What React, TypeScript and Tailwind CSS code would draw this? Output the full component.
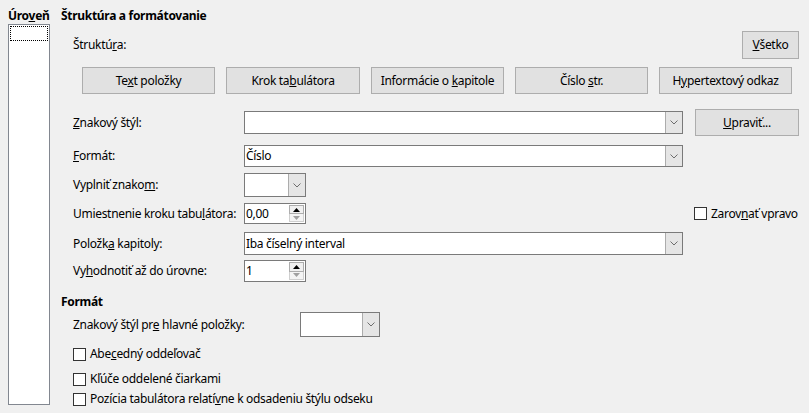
import React from 'react';

const font = "font-['Segoe_UI','Noto_Sans',sans-serif] text-[12px] leading-[16px] tracking-[-0.3px] text-black";

function Chevron() {
    return (
        <svg width="8" height="5" viewBox="0 0 8 5">
            <path d="M0.5 0.5 L4 4 L7.5 0.5" fill="none" stroke="#6d6d6d" strokeWidth="1" />
        </svg>
    );
}

function Combo({ width, height, value }: { width: number; height: number; value?: string }) {
    return (
        <div
            className="flex shrink-0 bg-white border border-[#7a7a7a]"
            style={{ width, height }}
        >
            <div className="flex-1 flex items-center pl-[1px] overflow-hidden whitespace-nowrap">{value}</div>
            <div className="w-[17px] flex items-center justify-center bg-[#e5e5e5] border-l border-[#acacac]">
                <Chevron />
            </div>
        </div>
    );
}

function Spin({ height, value }: { height: number; value: string }) {
    return (
        <div className="flex shrink-0 bg-white border border-[#7a7a7a] w-[62px]" style={{ height }}>
            <div className="flex-1 flex items-center pl-[1px]">{value}</div>
            <div className="w-[16px] flex flex-col py-[1px] pr-[1px]">
                <div className="flex-1 flex items-center justify-center bg-[#f0f0f0] border border-[#adadad]">
                    <svg width="7" height="4" viewBox="0 0 7 4">
                        <path d="M0 4 L3.5 0 L7 4 Z" fill="#000" />
                    </svg>
                </div>
                <div className="flex-1 flex items-center justify-center bg-[#f4f4f4] border border-t-0 border-[#cfcfcf]">
                    <svg width="7" height="4" viewBox="0 0 7 4">
                        <path d="M0 0 L3.5 4 L7 0 Z" fill="#a0a0a0" />
                    </svg>
                </div>
            </div>
        </div>
    );
}

function Button({ children, className }: { children: React.ReactNode; className: string }) {
    return (
        <div className={`flex shrink-0 items-center justify-center bg-[#e1e1e1] border border-[#adadad] whitespace-nowrap ${className}`}>
            <span>{children}</span>
        </div>
    );
}

function Check({ children }: { children: React.ReactNode }) {
    return (
        <div className="flex items-center">
            <div className="w-[13px] h-[13px] bg-white border border-[#333]" />
            <span className="ml-[4px] whitespace-nowrap">{children}</span>
        </div>
    );
}

function Label({ children }: { children: React.ReactNode }) {
    return <div className="w-[171px] shrink-0 whitespace-nowrap">{children}</div>;
}

export default function App() {
    return (
        <div className={`w-[809px] h-[413px] bg-[#f0f0f0] flex overflow-hidden ${font}`}>
            {/* Level list */}
            <div className="pl-[8px] pt-[8px] w-[61px] shrink-0 flex flex-col">
                <div className="font-bold h-[16px] whitespace-nowrap">Úro<u>v</u>eň</div>
                <div className="w-[42px] h-[381px] bg-white border border-[#828790] p-[1px]">
                    <div className="h-[15px] border border-dotted border-black" />
                </div>
            </div>

            {/* Main */}
            <div className="flex-1 min-w-0 pt-[8px] pr-[10px] flex flex-col">
                <div className="font-bold h-[16px]">Štruktúra a formátovanie</div>

                <div className="mt-[7px] h-[28px] flex items-center pl-[12px]">
                    <div className="flex-1">Štruktú<u>r</u>a:</div>
                    <Button className="w-[57px] h-[28px]"><u>V</u>šetko</Button>
                </div>

                <div className="mt-[8px] h-[27px] flex gap-[11px] pl-[21px]">
                    <Button className="w-[133px] h-[27px]">Te<u>x</u>t položky</Button>
                    <Button className="w-[134px] h-[27px]">Krok ta<u>b</u>ulátora</Button>
                    <Button className="w-[133px] h-[27px]">Informácie o <u>k</u>apitole</Button>
                    <Button className="w-[133px] h-[27px]">Číslo <u>s</u>tr.</Button>
                    <Button className="w-[133px] h-[27px]">H<u>y</u>pertextový odkaz</Button>
                </div>

                <div className="mt-[15px] h-[27px] flex items-center pl-[12px]">
                    <Label><u>Z</u>nakový štýl:</Label>
                    <Combo width={439} height={23} />
                    <Button className="ml-[12px] w-[104px] h-[27px]"><u>U</u>praviť...</Button>
                </div>

                <div className="mt-[9px] h-[22px] flex items-center pl-[12px]">
                    <Label><u>F</u>ormát:</Label>
                    <Combo width={439} height={22} value="Číslo" />
                </div>

                <div className="mt-[6px] h-[24px] flex items-center pl-[12px]">
                    <Label>Vyplniť znako<u>m</u>:</Label>
                    <Combo width={62} height={24} />
                </div>

                <div className="mt-[6px] h-[21px] flex items-center pl-[12px]">
                    <Label>Umiestnenie kroku tabu<u>l</u>átora:</Label>
                    <Spin height={21} value="0,00" />
                    <div className="ml-[388px]">
                        <Check>Zarov<u>n</u>ať vpravo</Check>
                    </div>
                </div>

                <div className="mt-[8px] h-[23px] flex items-center pl-[12px]">
                    <Label>Položk<u>a</u> kapitoly:</Label>
                    <Combo width={439} height={23} value="Iba číselný interval" />
                </div>

                <div className="mt-[5px] h-[22px] flex items-center pl-[12px]">
                    <Label>Vy<u>h</u>odnotiť až do úrovne:</Label>
                    <Spin height={22} value="1" />
                </div>

                <div className="mt-[12px] font-bold h-[16px]">Formát</div>

                <div className="mt-[2px] h-[25px] flex items-center pl-[12px]">
                    <div className="w-[227px] shrink-0 whitespace-nowrap">Znakový štýl pr<u>e</u> hlavné položky:</div>
                    <Combo width={80} height={25} />
                </div>

                <div className="mt-[7px] h-[20px] flex items-center pl-[12px]">
                    <Check>Abe<u>c</u>edný oddeľovač</Check>
                </div>
                <div className="mt-[5px] h-[20px] flex items-center pl-[12px]">
                    <Check>Kľúče oddelené čiarkami</Check>
                </div>
                <div className="h-[20px] flex items-center pl-[12px]">
                    <Check>Pozícia tabulátora relatí<u>v</u>ne k odsadeniu štýlu odseku</Check>
                </div>
            </div>
        </div>
    );
}
